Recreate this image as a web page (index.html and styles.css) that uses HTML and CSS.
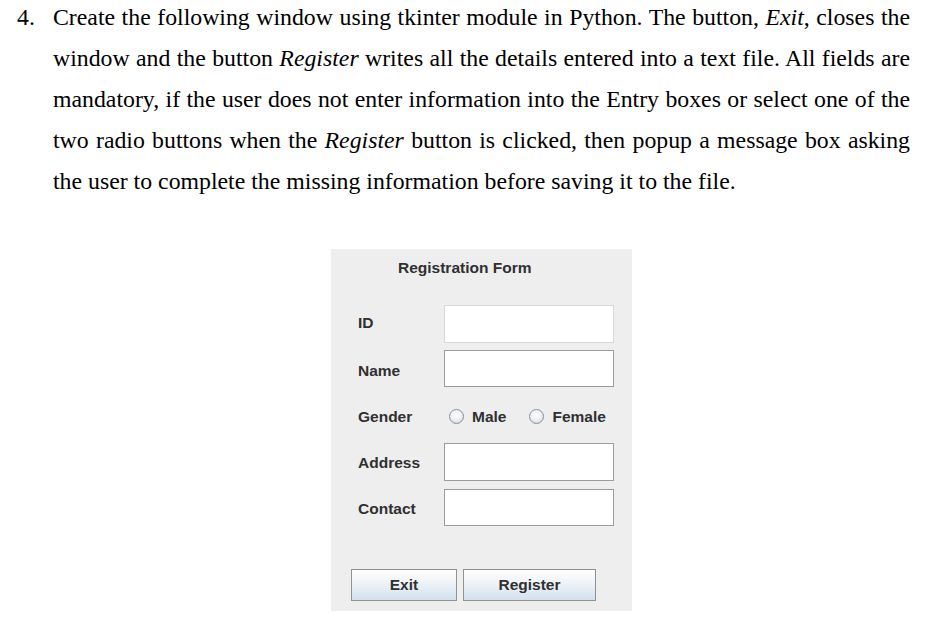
FILE: index.html
```html
<!DOCTYPE html>
<html>
<head>
<meta charset="utf-8">
<link rel="stylesheet" href="styles.css">
</head>
<body>
<div class="question">
  <span class="qnum">4.</span>
  <p class="qtext">
    <span class="ln">Create the following window using tkinter module in Python. The button, <i>Exit</i>, closes the</span>
    <span class="ln">window and the button <i>Register</i> writes all the details entered into a text file. All fields are</span>
    <span class="ln">mandatory, if the user does not enter information into the Entry boxes or select one of the</span>
    <span class="ln">two radio buttons when the <i>Register</i> button is clicked, then popup a message box asking</span>
    <span class="ln last">the user to complete the missing information before saving it to the file.</span>
  </p>
</div>
<div class="figure">
  <div class="panel">
    <div class="title">Registration Form</div>
    <div class="row r-id"><span class="label">ID</span><span class="entry focus"></span></div>
    <div class="row r-name"><span class="label">Name</span><span class="entry"></span></div>
    <div class="row r-gender"><span class="label">Gender</span>
      <span class="radios">
        <span class="radio"><span class="dot"></span>Male</span>
        <span class="radio"><span class="dot"></span>Female</span>
      </span>
    </div>
    <div class="row r-addr"><span class="label">Address</span><span class="entry"></span></div>
    <div class="row r-contact"><span class="label">Contact</span><span class="entry"></span></div>
    <div class="buttons">
      <span class="btn btn-exit">Exit</span>
      <span class="btn btn-reg">Register</span>
    </div>
  </div>
</div>
</body>
</html>
```
FILE: styles.css
```css
html, body {
  margin: 0;
  padding: 0;
  background: #ffffff;
}
.question {
  display: flex;
  margin-top: -3px;
  font-family: "Liberation Serif", "Times New Roman", serif;
  font-size: 23.8px;
  line-height: 41px;
  color: #000;
}
.qnum {
  width: 36px;
  padding-left: 17px;
  flex: none;
}
.qtext {
  margin: 0;
  width: 857px;
}
.ln {
  display: block;
  white-space: nowrap;
  text-align: justify;
  text-align-last: justify;
}
.ln.last {
  text-align: left;
  text-align-last: left;
}
.figure {
  margin-top: 47px;
  padding-left: 331px;
}
.panel {
  width: 301px;
  height: 362px;
  box-sizing: border-box;
  background: #eeeeee;
  padding: 9px 0 0 27px;
  font-family: "Liberation Sans", Arial, sans-serif;
  font-weight: bold;
  font-size: 15.5px;
  color: #303030;
  display: flex;
  flex-direction: column;
}
.title {
  height: 20px;
  line-height: 20px;
  font-size: 15.5px;
  padding-left: 40px;
}
.row {
  display: flex;
  align-items: center;
}
.label {
  width: 86px;
  flex: none;
}
.entry {
  display: block;
  width: 170px;
  height: 100%;
  box-sizing: border-box;
  background: #ffffff;
  border: 1px solid #9c9c9c;
}
.entry.focus {
  border-color: #d6d8dc;
}
.r-id { margin-top: 27px; height: 38px; }
.r-name { margin-top: 7px; height: 37px; }
.r-gender { margin-top: 17px; height: 26px; }
.r-addr { margin-top: 13px; height: 38px; }
.r-contact { margin-top: 8px; height: 37px; }
.r-id .label { margin-top: -2px; }
.r-name .label { padding-top: 4px; }
.r-gender .label { margin-top: -1px; }
.r-gender .radios { margin-top: -1px; }
.r-addr .label { margin-top: 1px; }
.r-contact .label { margin-top: 3px; }
.radios {
  display: flex;
  align-items: center;
  padding-left: 5px;
  gap: 23px;
}
.radio {
  display: flex;
  align-items: center;
  gap: 8px;
}
.dot {
  width: 15px;
  height: 15px;
  box-sizing: border-box;
  border-radius: 50%;
  border: 1px solid #8c9096;
  background: radial-gradient(circle at 45% 35%, #ffffff 0%, #eef2f6 45%, #c9d3de 100%);
}
.buttons {
  display: flex;
  gap: 6px;
  margin-top: 43px;
  margin-left: -7px;
}
.btn {
  height: 32px;
  box-sizing: border-box;
  border: 1px solid #8f9194;
  background: linear-gradient(#ffffff 0%, #f0f4f9 40%, #d4e0ed 100%);
  display: flex;
  align-items: center;
  justify-content: center;
  color: #303030;
}
.btn-exit { width: 106px; }
.btn-reg { width: 133px; }
```
